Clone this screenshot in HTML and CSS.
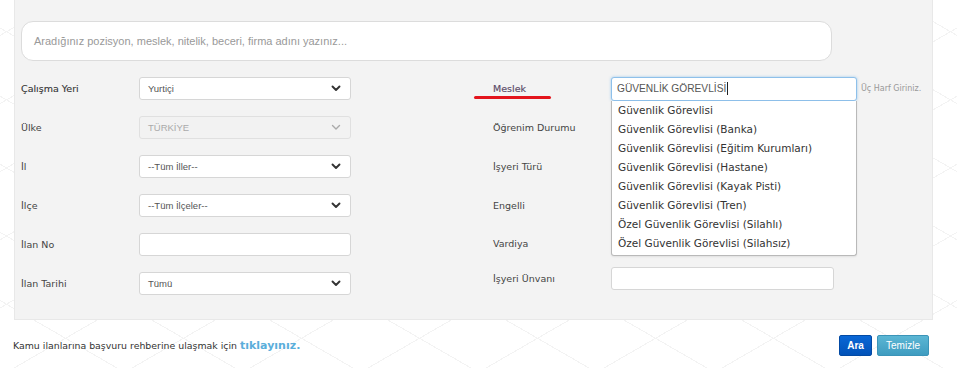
FILE: index.html
```html
<!DOCTYPE html>
<html lang="tr">
<head>
<meta charset="utf-8">
<title>İlan Arama</title>
<link rel="stylesheet" href="styles.css">
</head>
<body>
<div class="page">
  <div class="panel">
    <div class="search">Aradığınız pozisyon, meslek, nitelik, beceri, firma adını yazınız...</div>
    <div class="form">
      <div class="col col-left">
        <div class="row"><span class="label strong">Çalışma Yeri</span><div class="select"><span>Yurtiçi</span><svg class="chev" viewBox="0 0 10 7"><path d="M1.5 1.5 5 5 8.5 1.5" /></svg></div></div>
        <div class="row"><span class="label">Ülke</span><div class="select disabled"><span>TÜRKİYE</span><svg class="chev" viewBox="0 0 10 7"><path d="M1.5 1.5 5 5 8.5 1.5" /></svg></div></div>
        <div class="row"><span class="label">İl</span><div class="select"><span>--Tüm İller--</span><svg class="chev" viewBox="0 0 10 7"><path d="M1.5 1.5 5 5 8.5 1.5" /></svg></div></div>
        <div class="row"><span class="label">İlçe</span><div class="select"><span>--Tüm İlçeler--</span><svg class="chev" viewBox="0 0 10 7"><path d="M1.5 1.5 5 5 8.5 1.5" /></svg></div></div>
        <div class="row"><span class="label">İlan No</span><div class="input"></div></div>
        <div class="row"><span class="label">İlan Tarihi</span><div class="select"><span>Tümü</span><svg class="chev" viewBox="0 0 10 7"><path d="M1.5 1.5 5 5 8.5 1.5" /></svg></div></div>
      </div>
      <div class="col col-right">
        <div class="row meslek-row">
          <span class="label strong meslek">Meslek<i class="mark"></i></span>
          <div class="ac">
            <div class="ac-input">GÜVENLİK GÖREVLİSİ<i class="caret"></i></div>
            <ul class="ac-list">
              <li>Güvenlik Görevlisi</li>
              <li>Güvenlik Görevlisi (Banka)</li>
              <li>Güvenlik Görevlisi (Eğitim Kurumları)</li>
              <li>Güvenlik Görevlisi (Hastane)</li>
              <li>Güvenlik Görevlisi (Kayak Pisti)</li>
              <li>Güvenlik Görevlisi (Tren)</li>
              <li>Özel Güvenlik Görevlisi (Silahlı)</li>
              <li>Özel Güvenlik Görevlisi (Silahsız)</li>
            </ul>
          </div>
          <span class="hint">Üç Harf Giriniz.</span>
        </div>
        <div class="row"><span class="label">Öğrenim Durumu</span></div>
        <div class="row"><span class="label">İşyeri Türü</span></div>
        <div class="row"><span class="label">Engelli</span></div>
        <div class="row row-short"><span class="label">Vardiya</span></div>
        <div class="row row-short2"><span class="label">İşyeri Ünvanı</span><div class="input wide"></div></div>
      </div>
    </div>
  </div>
  <div class="footer">
    <p class="guide">Kamu ilanlarına başvuru rehberine ulaşmak için <a class="link">tıklayınız.</a></p>
    <div class="buttons">
      <button class="btn btn-primary">Ara</button>
      <button class="btn btn-info">Temizle</button>
    </div>
  </div>
</div>
</body>
</html>
```
FILE: styles.css
```css
* { box-sizing: border-box; }
html, body { margin: 0; padding: 0; }
body {
  width: 957px;
  height: 368px;
  overflow: hidden;
  font-family: "DejaVu Sans", Verdana, sans-serif;
  color: #444;
  background-color: #fff;
  background-image:
    repeating-linear-gradient(30deg, transparent 0 58px, #f3f3f3 58px 59px),
    repeating-linear-gradient(-30deg, transparent 0 58px, #f3f3f3 58px 59px);
}
.page { padding: 0 24px 0 14px; }
.panel {
  background: #f3f3f3;
  border: 1px solid #e8e8e8;
  border-top: none;
  padding: 21px 100px 16px 6px;
}
.search {
  height: 40px;
  background: #fff;
  border: 1px solid #dcdcdc;
  border-radius: 12px;
  padding: 0 12px;
  display: flex;
  align-items: center;
  font-family: "Liberation Sans", Arial, sans-serif;
  font-size: 11px;
  color: #999;
}
.form {
  display: flex;
  gap: 142px;
  margin-top: 8px;
}
.col { display: flex; flex-direction: column; }
.col-left { width: 330px; }
.col-right { width: 420px; }
.row {
  height: 39px;
  display: flex;
  align-items: center;
  position: relative;
}
.row-short { height: 36px; }
.row-short2 { height: 35px; }
.label {
  width: 118px;
  flex: none;
  font-size: 9.5px;
  color: #444;
  position: relative;
}
.label.strong { color: #333; -webkit-text-stroke: 0.12px #333; }
.label.meslek { color: #5a4a66; -webkit-text-stroke: 0.15px #5a4a66; }
.mark {
  position: absolute;
  left: -19px;
  top: 13px;
  width: 77px;
  height: 3px;
  border-radius: 2px;
  background: #e3141c;
}
.select, .input {
  width: 212px;
  height: 23px;
  background: #fff;
  border: 1px solid #d6d6d6;
  border-radius: 3px;
  display: flex;
  align-items: center;
  justify-content: space-between;
  padding: 0 8px 0 8px;
  font-family: "Liberation Sans", Arial, sans-serif;
  font-size: 9.5px;
  color: #555;
}
.select.disabled { background: #f2f2f2; color: #aaa; border-color: #e0e0e0; }
.chev { width: 10px; height: 7px; margin-right: 1px; }
.chev path { fill: none; stroke: #333; stroke-width: 1.9; stroke-linecap: round; stroke-linejoin: round; }
.select.disabled .chev path { stroke: #aaa; stroke-width: 1.4; }
.input.wide { width: 223px; }
.ac { position: relative; width: 246px; height: 24px; flex: none; }
.ac-input {
  height: 24px;
  background: #fff;
  border: 1px solid #8ec0ea;
  border-radius: 3px;
  box-shadow: 0 0 3px rgba(102, 175, 233, 0.6);
  padding: 0 5px;
  display: flex;
  align-items: center;
  font-family: "Liberation Sans", Arial, sans-serif;
  font-size: 10.2px;
  color: #555;
}
.caret { display: inline-block; width: 1px; height: 13px; background: #222; margin-left: 1px; }
.ac-list {
  position: absolute;
  z-index: 5;
  top: 24px;
  left: 0;
  width: 246px;
  margin: 0;
  padding: 0 0 2px;
  list-style: none;
  background: #fff;
  border: 1px solid #b9b9b9;
  border-top: none;
  border-radius: 0 0 3px 3px;
  box-shadow: 0 1px 2px rgba(0, 0, 0, 0.08);
}
.ac-list li {
  height: 19px;
  line-height: 19px;
  padding-left: 6px;
  font-size: 10.5px;
  color: #333;
  white-space: nowrap;
}
.hint {
  margin-left: 4px;
  font-size: 8px;
  color: #999;
  white-space: nowrap;
}
.footer {
  display: flex;
  justify-content: space-between;
  align-items: center;
  padding: 15px 4px 0 0;
  margin-left: -1px;
}
.guide {
  margin: 0;
  font-size: 9.4px;
  color: #333;
  line-height: 21px;
}
.link {
  color: #5aaedb;
  font-weight: bold;
  font-size: 11px;
  cursor: pointer;
}
.buttons { display: flex; gap: 5px; }
.btn {
  height: 21px;
  border-radius: 2px;
  border: 1px solid transparent;
  font-family: "Liberation Sans", Arial, sans-serif;
  font-size: 10px;
  color: #fff;
  padding: 0;
  cursor: pointer;
}
.btn-primary {
  width: 33px;
  font-weight: bold;
  background: linear-gradient(#0a67d6, #0152b8);
  border-color: #034aa4;
}
.btn-info {
  width: 52px;
  background: linear-gradient(#5bb6d4, #3f9cc0);
  border-color: #3b94b8;
}
```
